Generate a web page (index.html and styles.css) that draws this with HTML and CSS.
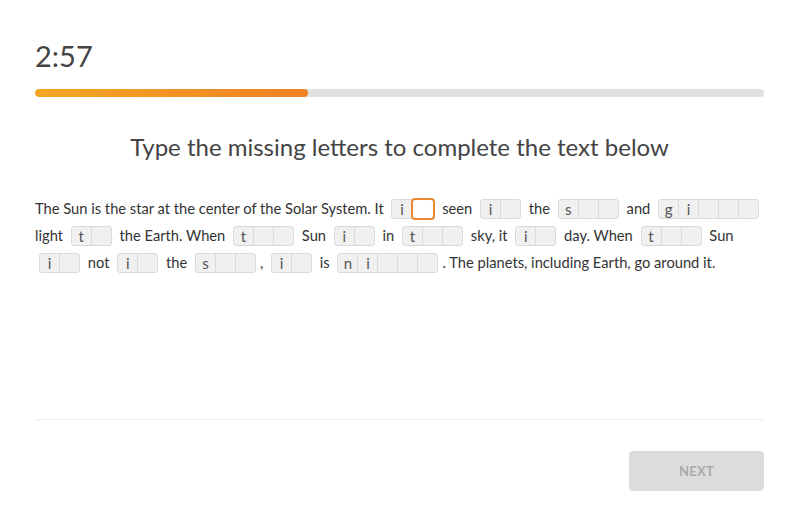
FILE: index.html
```html
<!DOCTYPE html>
<html>
<head>
<meta charset="utf-8">
<link rel="stylesheet" href="styles.css">
</head>
<body>
<div class="page">
  <div class="timer">2:57</div>
  <div class="progress"><div class="fill" style="width:37.5%"></div></div>
  <h1 class="title">Type the missing letters to complete the text below</h1>
  <p class="text">The Sun is the star at the center of the Solar System. It <span class="word"><span class="c">i</span><span class="c focus"></span></span> seen <span class="word"><span class="c">i</span><span class="c"></span></span> the <span class="word"><span class="c">s</span><span class="c"></span><span class="c"></span></span> and <span class="word"><span class="c">g</span><span class="c">i</span><span class="c"></span><span class="c"></span><span class="c"></span></span> light <span class="word"><span class="c">t</span><span class="c"></span></span> the Earth. When <span class="word"><span class="c">t</span><span class="c"></span><span class="c"></span></span> Sun <span class="word"><span class="c">i</span><span class="c"></span></span> in <span class="word"><span class="c">t</span><span class="c"></span><span class="c"></span></span> sky, it <span class="word"><span class="c">i</span><span class="c"></span></span> day. When <span class="word"><span class="c">t</span><span class="c"></span><span class="c"></span></span> Sun <span class="word"><span class="c">i</span><span class="c"></span></span> not <span class="word"><span class="c">i</span><span class="c"></span></span> the <span class="word"><span class="c">s</span><span class="c"></span><span class="c"></span></span>, <span class="word"><span class="c">i</span><span class="c"></span></span> is <span class="word"><span class="c">n</span><span class="c">i</span><span class="c"></span><span class="c"></span><span class="c"></span></span>. The planets, including Earth, go around it.</p>
  <div class="spacer"></div>
  <div class="footer">
    <button class="next">NEXT</button>
  </div>
</div>
</body>
</html>
```
FILE: styles.css
```css
html, body { margin: 0; padding: 0; background: #fff; }
body { font-family: Lato, "Open Sans", sans-serif; color: #333; }
.page {
  width: 729px;
  margin: 0 auto;
  padding: 0 28px 0 35px;
  box-sizing: content-box;
  height: 511px;
  display: flex;
  flex-direction: column;
}
.timer {
  font-size: 29px;
  color: #444;
  margin-top: 38px;
  line-height: 36px;
  height: 36px;
}
.progress {
  margin-top: 15px;
  height: 8px;
  border-radius: 4px;
  background: #e0e0e0;
  overflow: hidden;
}
.fill {
  height: 100%;
  border-radius: 4px;
  background: linear-gradient(90deg, #f4a623, #ef8125);
}
.title {
  margin: 35px 0 0;
  text-align: center;
  font-weight: 400;
  font-size: 24px;
  line-height: 30px;
  color: #444;
}
.text {
  margin: 33px 0 0;
  font-size: 14.7px;
  line-height: 27px;
  color: #333;
}
.word {
  display: inline-flex;
  vertical-align: middle;
  margin: -3px 4px 0;
  border: 1px solid #dadada;
  border-radius: 3px;
  background: #f0f0f0;
  height: 18px;
}
.c {
  width: 19px;
  height: 18px;
  line-height: 18px;
  text-align: center;
  font-size: 15px;
  color: #555;
  border-left: 1px solid #dadada;
}
.c:first-child { border-left: none; }
.c.focus {
  width: 20px;
  height: 18px;
  margin: -2px -2px -2px 0;
  border: 2px solid #ea8a35;
  border-radius: 4px;
  background: #fff;
}
.spacer { flex: 1; }
.footer {
  border-top: 1px solid #eee;
  display: flex;
  justify-content: flex-end;
  padding-top: 31px;
  margin-bottom: 20px;
}
.next {
  width: 135px;
  height: 40px;
  border: none;
  border-radius: 4px;
  background: #dcdcdc;
  color: #aaa;
  font-family: Lato, "Open Sans", sans-serif;
  font-weight: 700;
  font-size: 13px;
  letter-spacing: 0.3px;
}
```
